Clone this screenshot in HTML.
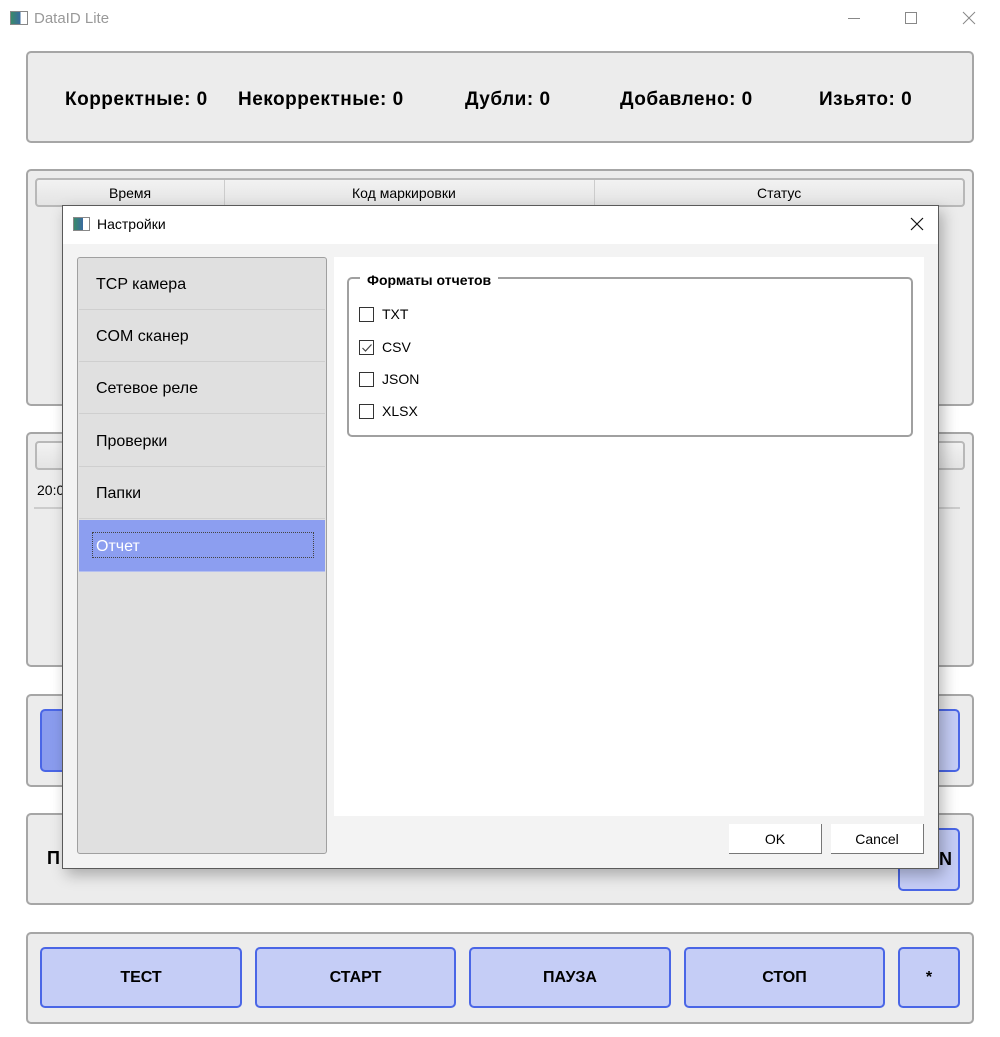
<!DOCTYPE html>
<html><head><meta charset="utf-8"><style>
*{box-sizing:border-box;margin:0;padding:0}
body{width:1000px;height:1037px;background:#fff;position:relative;overflow:hidden;font-family:"Segoe UI","Liberation Sans","DejaVu Sans",sans-serif;color:#000}
.a{position:absolute}
.panel{position:absolute;left:26px;width:948px;background:#ececec;border:2px solid #a6a6a6;border-radius:5px}
.stat{position:absolute;top:89px;font-weight:bold;font-size:19px;letter-spacing:0.5px;white-space:nowrap}
.btn{position:absolute;background:#c5cdf6;border:2px solid #4a66e6;border-radius:5px;font-weight:bold;font-size:16px;display:flex;align-items:center;justify-content:center}
.hdr{position:absolute;left:35px;width:930px;height:29px;background:linear-gradient(#f2f2f2,#e4e4e4);border:2px solid #b8b8b8;border-radius:4px;font-size:14px}
.item{position:absolute;left:1px;width:246px;height:52px;border-bottom:1px solid #cfcfcf;font-size:16px;padding:18px 0 0 17px}
.cb{position:absolute;left:359px;width:15px;height:15px;border:1px solid #333;background:#fff}
.lbl{position:absolute;left:382px;font-size:14px}
.db{position:absolute;top:824px;height:30px;background:#fff;border-right:1px solid #777;border-bottom:1px solid #777;font-size:14px;display:flex;align-items:center;justify-content:center}
</style></head><body>
<div class="a" style="left:10px;top:11px;width:18px;height:14px;border:1px solid #888;background:linear-gradient(90deg,#3a8a6a 0,#3a6aa0 60%,#fff 60%)"></div>
<div class="a" style="left:34px;top:10px;font-size:15px;color:#999">DataID Lite</div>
<div class="a" style="left:848px;top:18px;width:12px;height:1px;background:#888"></div>
<div class="a" style="left:905px;top:12px;width:12px;height:12px;border:1px solid #888"></div>
<svg class="a" style="left:962px;top:11px" width="14" height="14"><path d="M1 1L13 13M13 1L1 13" stroke="#888" stroke-width="1"/></svg>

<div class="panel" style="top:51px;height:92px"></div>
<div class="stat" style="left:65px">Корректные: 0</div>
<div class="stat" style="left:238px">Некорректные: 0</div>
<div class="stat" style="left:465px">Дубли: 0</div>
<div class="stat" style="left:620px">Добавлено: 0</div>
<div class="stat" style="left:819px">Изьято: 0</div>

<div class="panel" style="top:169px;height:237px"></div>
<div class="hdr" style="top:178px">
<span class="a" style="left:72px;top:5px">Время</span>
<span class="a" style="left:187px;top:0;height:26px;border-left:1px solid #ccc"></span>
<span class="a" style="left:315px;top:5px">Код маркировки</span>
<span class="a" style="left:557px;top:0;height:26px;border-left:1px solid #ccc"></span>
<span class="a" style="left:720px;top:5px">Статус</span>
</div>

<div class="panel" style="top:432px;height:235px"></div>
<div class="hdr" style="top:441px"></div>
<div class="a" style="left:37px;top:482px;font-size:14px">20:0</div>
<div class="a" style="left:34px;top:507px;width:926px;height:2px;background:#ccc"></div>

<div class="panel" style="top:694px;height:93px"></div>
<div class="btn" style="left:40px;top:709px;width:60px;height:63px;background:#8a9cee"></div>
<div class="btn" style="left:898px;top:709px;width:62px;height:63px"></div>

<div class="panel" style="top:813px;height:92px"></div>
<div class="a" style="left:47px;top:848px;font-weight:bold;font-size:18px">П</div>
<div class="btn" style="left:898px;top:828px;width:62px;height:63px;justify-content:flex-end;padding-right:6px;font-size:18px">N</div>

<div class="panel" style="top:932px;height:92px"></div>
<div class="btn" style="left:40px;top:947px;width:202px;height:61px">ТЕСТ</div>
<div class="btn" style="left:255px;top:947px;width:201px;height:61px">СТАРТ</div>
<div class="btn" style="left:469px;top:947px;width:202px;height:61px">ПАУЗА</div>
<div class="btn" style="left:684px;top:947px;width:201px;height:61px">СТОП</div>
<div class="btn" style="left:898px;top:947px;width:62px;height:61px">*</div>

<div class="a" style="left:62px;top:205px;width:877px;height:664px;background:#f3f3f3;border:1px solid #5a5a5a;box-shadow:4px 6px 14px rgba(0,0,0,.28)">
 <div class="a" style="left:0;top:0;width:875px;height:38px;background:#fff"></div>
</div>
<div class="a" style="left:73px;top:217px;width:17px;height:14px;border:1px solid #888;background:linear-gradient(90deg,#3a8a6a 0,#3a6aa0 60%,#fff 60%)"></div>
<div class="a" style="left:97px;top:216px;font-size:14px">Настройки</div>
<svg class="a" style="left:910px;top:217px" width="14" height="14"><path d="M1 1L13 13M13 1L1 13" stroke="#111" stroke-width="1.2"/></svg>

<div class="a" style="left:77px;top:257px;width:250px;height:597px;background:#e0e0e0;border:1px solid #a0a0a0;border-radius:3px">
 <div class="item" style="top:0">TCP камера</div>
 <div class="item" style="top:52px">COM сканер</div>
 <div class="item" style="top:104px">Сетевое реле</div>
 <div class="item" style="top:157px">Проверки</div>
 <div class="item" style="top:209px">Папки</div>
 <div class="item" style="top:262px;background:#8c9ef0;color:#fff;border-bottom:1px solid #b5c0f0">Отчет
  <div class="a" style="left:13px;top:12px;width:222px;height:26px;border:1px dotted #444"></div></div>
</div>

<div class="a" style="left:334px;top:257px;width:590px;height:559px;background:#fff"></div>
<div class="a" style="left:347px;top:277px;width:566px;height:160px;border:2px solid #a0a0a0;border-radius:5px"></div>
<div class="a" style="left:360px;top:272px;background:#fff;padding:0 7px;font-weight:bold;font-size:14px">Форматы отчетов</div>
<div class="cb" style="top:307px"></div><div class="lbl" style="top:306px">TXT</div>
<div class="cb" style="top:340px"></div><div class="lbl" style="top:339px">CSV</div>
<svg class="a" style="left:361px;top:342px" width="12" height="12"><path d="M1.5 6 L4.5 9 L10.5 2.5" fill="none" stroke="#444" stroke-width="1.2"/></svg>
<div class="cb" style="top:372px"></div><div class="lbl" style="top:371px">JSON</div>
<div class="cb" style="top:404px"></div><div class="lbl" style="top:403px">XLSX</div>

<div class="db" style="left:729px;width:93px">OK</div>
<div class="db" style="left:831px;width:93px">Cancel</div>
</body></html>
